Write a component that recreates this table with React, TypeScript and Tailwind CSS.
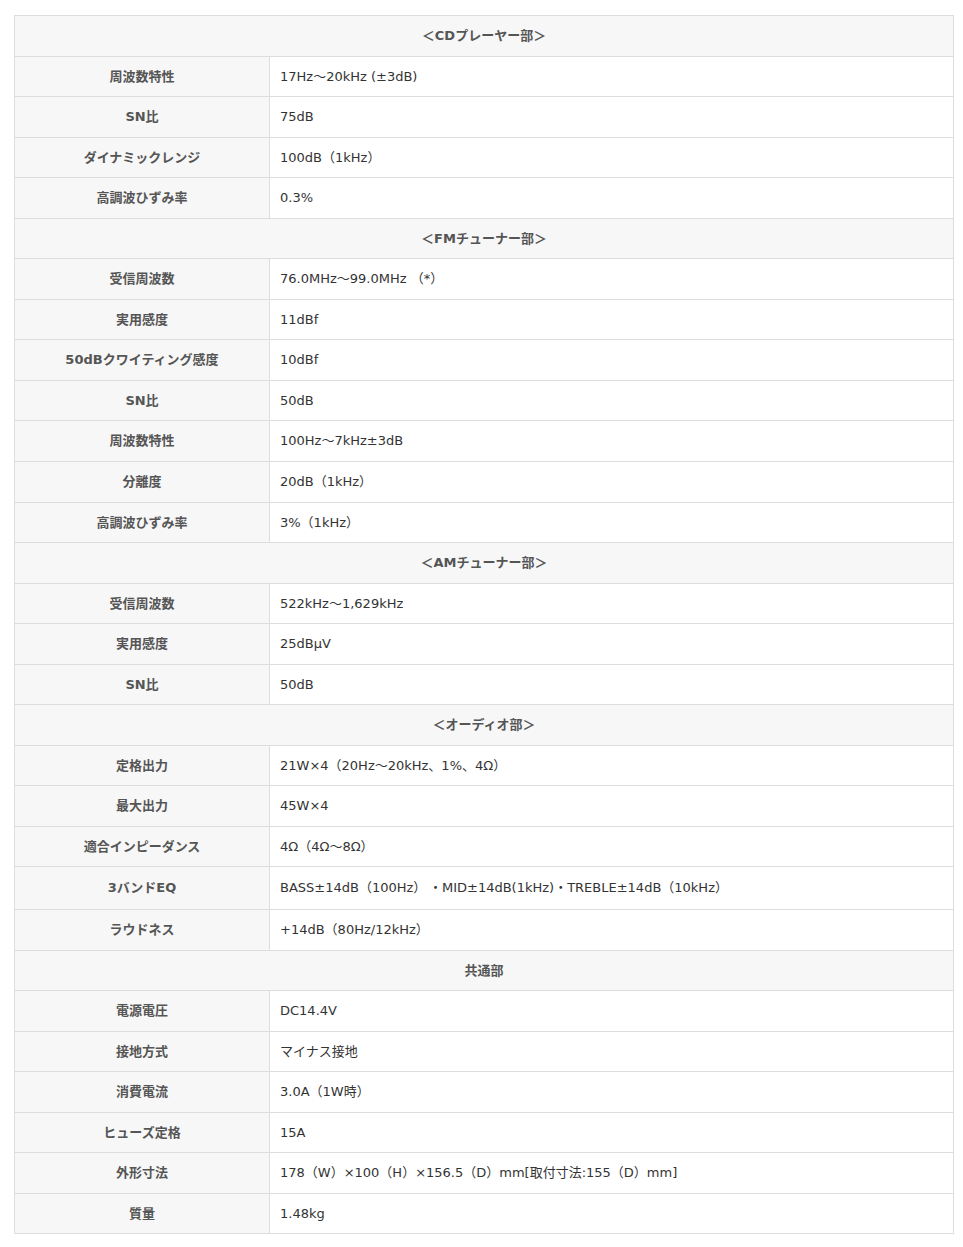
type Row = { label: string; value: string; tall?: boolean } | { section: string };

/* ── 仕様データ ── */
const SPECS: Row[] = [
  { section: "＜CDプレーヤー部＞" },
  { label: "周波数特性", value: "17Hz～20kHz (±3dB)" },
  { label: "SN比", value: "75dB" },
  { label: "ダイナミックレンジ", value: "100dB（1kHz）" },
  { label: "高調波ひずみ率", value: "0.3%" },
  { section: "＜FMチューナー部＞" },
  { label: "受信周波数", value: "76.0MHz～99.0MHz （*）" },
  { label: "実用感度", value: "11dBf" },
  { label: "50dBクワイティング感度", value: "10dBf" },
  { label: "SN比", value: "50dB" },
  { label: "周波数特性", value: "100Hz～7kHz±3dB" },
  { label: "分離度", value: "20dB（1kHz）" },
  { label: "高調波ひずみ率", value: "3%（1kHz）" },
  { section: "＜AMチューナー部＞" },
  { label: "受信周波数", value: "522kHz～1,629kHz" },
  { label: "実用感度", value: "25dBμV" },
  { label: "SN比", value: "50dB" },
  { section: "＜オーディオ部＞" },
  { label: "定格出力", value: "21W×4（20Hz～20kHz、1%、4Ω）" },
  { label: "最大出力", value: "45W×4" },
  { label: "適合インピーダンス", value: "4Ω（4Ω～8Ω）" },
  { label: "3バンドEQ", value: "BASS±14dB（100Hz）\u2009・MID±14dB(1kHz)・TREBLE±14dB（10kHz）", tall: true },
  { label: "ラウドネス", value: "+14dB（80Hz/12kHz）" },
  { section: "共通部" },
  { label: "電源電圧", value: "DC14.4V" },
  { label: "接地方式", value: "マイナス接地" },
  { label: "消費電流", value: "3.0A（1W時）" },
  { label: "ヒューズ定格", value: "15A" },
  { label: "外形寸法", value: "178（W）×100（H）×156.5（D）mm[取付寸法:155（D）mm]" },
  { label: "質量", value: "1.48kg" },
];

export default function App() {
  return (
    <div
      className="min-h-[1247px] bg-white pt-[15px] pl-[14px] pr-[9px] text-[13px]"
      style={{ fontFamily: '"DejaVu Sans", "Noto Sans CJK JP", sans-serif' }}
    >
      <table className="w-[940px] border-collapse">
        <tbody>
          {SPECS.map((row, i) =>
            "section" in row ? (
              <tr key={i} className="h-[40.55px]">
                <td
                  colSpan={2}
                  className="border border-[#dddddd] bg-[#f7f7f7] p-0 text-center font-bold text-[#555555]"
                >
                  {row.section}
                </td>
              </tr>
            ) : (
              <tr key={i} className={row.tall ? "h-[42.5px]" : "h-[40.55px]"}>
                <td className="w-[255px] border border-[#dddddd] bg-[#f7f7f7] p-0 text-center font-bold text-[#555555]">
                  {row.label}
                </td>
                <td className="border border-[#dddddd] bg-white py-0 pl-[10px] pr-2 text-[#333333]">
                  {row.value}
                </td>
              </tr>
            )
          )}
        </tbody>
      </table>
    </div>
  );
}
